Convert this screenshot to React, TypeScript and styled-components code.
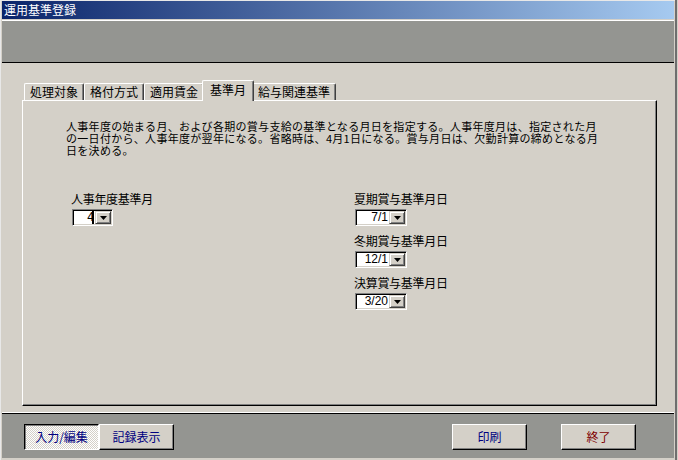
import { createGlobalStyle, styled } from 'styled-components'

// 運用基準登録 — 基準月タブ

const GlobalStyle = createGlobalStyle`
  html, body {
    margin: 0;
    padding: 0;
    background: #d4d0c8;
  }
  body {
    font-family: 'Noto Sans CJK JP', 'Liberation Sans', sans-serif;
    font-size: 12px;
    color: #000;
  }
`

const tabs = ['処理対象', '格付方式', '適用賃金', '基準月', '給与関連基準']
const activeTab = 3

const bonusDates = [
  { label: '夏期賞与基準月日', value: '7/1' },
  { label: '冬期賞与基準月日', value: '12/1' },
  { label: '決算賞与基準月日', value: '3/20' },
]

const Combo = ({ value, width, caret }: { value: string; width: number; caret?: boolean }) => (
  <StyledCombo $width={width}>
    <StyledField>
      {value}
      {caret && <StyledCaret />}
    </StyledField>
    <StyledDropButton>
      <svg width="7" height="4" viewBox="0 0 7 4">
        <path d="M0 0h7L3.5 4z" fill="#000" />
      </svg>
    </StyledDropButton>
  </StyledCombo>
)

const App = () => {
  return (
    <>
      <GlobalStyle />
      <StyledWindow>
        <StyledTitleBar>運用基準登録</StyledTitleBar>
        <StyledToolbar />
        <StyledMain>
          <StyledTabStrip>
            {tabs.map((tab, i) => (
              <StyledTab key={tab} $active={i === activeTab}>
                {tab}
              </StyledTab>
            ))}
          </StyledTabStrip>
          <StyledPanel>
            <StyledDescription>
              人事年度の始まる月、および各期の賞与支給の基準となる月日を指定する。人事年度月は、指定された月
              <br />
              の一日付から、人事年度が翌年になる。省略時は、4月1日になる。賞与月日は、欠勤計算の締めとなる月
              <br />
              日を決める。
            </StyledDescription>
            <StyledColumns>
              <StyledFieldGroup>
                <StyledLabel>人事年度基準月</StyledLabel>
                <Combo value="4" width={41} caret />
              </StyledFieldGroup>
              <StyledRightColumn>
                {bonusDates.map((item) => (
                  <StyledFieldGroup key={item.label}>
                    <StyledLabel>{item.label}</StyledLabel>
                    <Combo value={item.value} width={52} />
                  </StyledFieldGroup>
                ))}
              </StyledRightColumn>
            </StyledColumns>
          </StyledPanel>
        </StyledMain>
        <StyledBottomBar>
          <StyledButtonGroup>
            <StyledButton $pressed>入力/編集</StyledButton>
            <StyledButton>記録表示</StyledButton>
          </StyledButtonGroup>
          <StyledButtonGroup $gap={34}>
            <StyledButton>印刷</StyledButton>
            <StyledButton $danger>終了</StyledButton>
          </StyledButtonGroup>
        </StyledBottomBar>
      </StyledWindow>
    </>
  )
}

export default App

const StyledWindow = styled.div`
  width: 678px;
  height: 460px;
  box-sizing: border-box;
  padding: 1px 4px 2px 2px;

  display: flex;
  flex-direction: column;

  background: #d4d0c8;
  box-shadow: inset -1px 0 0 #d4d0c8, inset -3px 0 0 #6e6e6e, inset 1px 1px 0 #e8e8e8;
`

const StyledTitleBar = styled.div`
  height: 18px;
  padding-left: 2px;

  display: flex;
  align-items: center;

  background: linear-gradient(to right, #0a246a, #a6caf0);
  color: #fff;
  font-size: 12px;
  line-height: 18px;
`

const StyledToolbar = styled.div`
  height: 41px;
  margin-top: 1px;

  border-top: 1px solid #fff;
  border-bottom: 1px solid #000;
  background: #949591;
`

const StyledMain = styled.div`
  height: 332px;
  padding: 17px 0 0 20px;

  display: flex;
  flex-direction: column;

  border-bottom: 1px solid #fff;
`

const StyledTabStrip = styled.div`
  height: 20px;
  padding-left: 2px;

  display: flex;
  align-items: flex-end;

  position: relative;
  z-index: 1;
`

const StyledTab = styled.div<{ $active?: boolean }>`
  height: ${({ $active }) => ($active ? '21px' : '17px')};
  margin: ${({ $active }) => ($active ? '0 -2px -1px' : '0')};
  padding: ${({ $active }) => ($active ? '2px 7px 0' : '0 5px')};
  box-sizing: border-box;

  display: flex;
  align-items: ${({ $active }) => ($active ? 'flex-start' : 'center')};

  background: #d4d0c8;
  border-top: 1px solid #fff;
  border-left: 1px solid #fff;
  border-right: 1px solid #404040;
  border-radius: 2px 2px 0 0;
  box-shadow: inset -1px 0 0 #808080;

  font-size: 12px;
  line-height: 14px;
  white-space: nowrap;
  position: relative;
  z-index: ${({ $active }) => ($active ? 2 : 1)};
`

const StyledPanel = styled.div`
  width: 635px;
  height: 306px;
  box-sizing: border-box;
  padding: 19px 0 0 43px;

  border-top: 1px solid #fff;
  border-left: 1px solid #fff;
  border-right: 1px solid #000;
  border-bottom: 1px solid #000;
  box-shadow: inset -1px -1px 0 #808080;
`

const StyledDescription = styled.p`
  margin: 0;
  font-size: 11px;
  line-height: 12px;
  letter-spacing: 0.3px;
  white-space: nowrap;
`

const StyledColumns = styled.div`
  margin-top: 37px;
  padding-left: 5px;

  display: grid;
  grid-template-columns: 283px 1fr;
  align-items: start;
`

const StyledRightColumn = styled.div`
  display: flex;
  flex-direction: column;
  gap: 9px;
`

const StyledFieldGroup = styled.div`
  display: flex;
  flex-direction: column;
  align-items: flex-start;
  gap: 4px;
`

const StyledLabel = styled.div`
  font-size: 12px;
  line-height: 12px;
  letter-spacing: -0.3px;
  white-space: nowrap;
`

const StyledCombo = styled.div<{ $width: number }>`
  width: ${({ $width }) => $width}px;
  height: 17px;
  margin-left: 1px;
  padding: 1px;
  box-sizing: border-box;

  display: flex;

  border-top: 1px solid #808080;
  border-left: 1px solid #808080;
  border-right: 1px solid #fff;
  border-bottom: 1px solid #fff;
  box-shadow: inset 1px 1px 0 #000, inset -1px -1px 0 #d4d0c8;
`

const StyledField = styled.div`
  flex: 1;
  padding-right: 1px;

  display: flex;
  align-items: center;
  justify-content: flex-end;

  background: #fff;
  font-family: 'Liberation Sans', 'Noto Sans CJK JP', sans-serif;
  font-size: 12px;
  line-height: 13px;
`

const StyledCaret = styled.span`
  width: 2px;
  height: 13px;
  margin-left: -2px;
  background: #000;
`

const StyledDropButton = styled.div`
  width: 16px;
  box-sizing: border-box;

  display: flex;
  align-items: center;
  justify-content: center;

  background: #d4d0c8;
  border-top: 1px solid #d4d0c8;
  border-left: 1px solid #d4d0c8;
  border-right: 1px solid #404040;
  border-bottom: 1px solid #404040;
  box-shadow: inset 1px 1px 0 #fff, inset -1px -1px 0 #808080;
`

const StyledBottomBar = styled.div`
  flex: 1;
  padding: 10px 38px 0 22px;

  display: flex;
  align-items: flex-start;
  justify-content: space-between;

  border-top: 1px solid #000;
  background: #949591;
`

const StyledButtonGroup = styled.div<{ $gap?: number }>`
  display: flex;
  gap: ${({ $gap }) => $gap ?? 0}px;
`

const StyledButton = styled.div<{ $pressed?: boolean; $danger?: boolean }>`
  width: 75px;
  height: 26px;
  box-sizing: border-box;

  display: flex;
  align-items: center;
  justify-content: center;

  color: ${({ $danger }) => ($danger ? '#800000' : '#000080')};
  font-size: 12px;
  line-height: 14px;

  background: #d4d0c8;
  border-top: 1px solid #fff;
  border-left: 1px solid #fff;
  border-right: 1px solid #000;
  border-bottom: 1px solid #000;
  box-shadow: inset -1px -1px 0 #808080;

  ${({ $pressed }) =>
    $pressed &&
    `
    background-image: repeating-conic-gradient(#ffffff 0 25%, #d4d0c8 0 50%);
    background-size: 2px 2px;
    border-top: 1px solid #000;
    border-left: 1px solid #000;
    border-right: 1px solid #fff;
    border-bottom: 1px solid #fff;
    box-shadow: inset 1px 1px 0 #808080;
  `}
`
